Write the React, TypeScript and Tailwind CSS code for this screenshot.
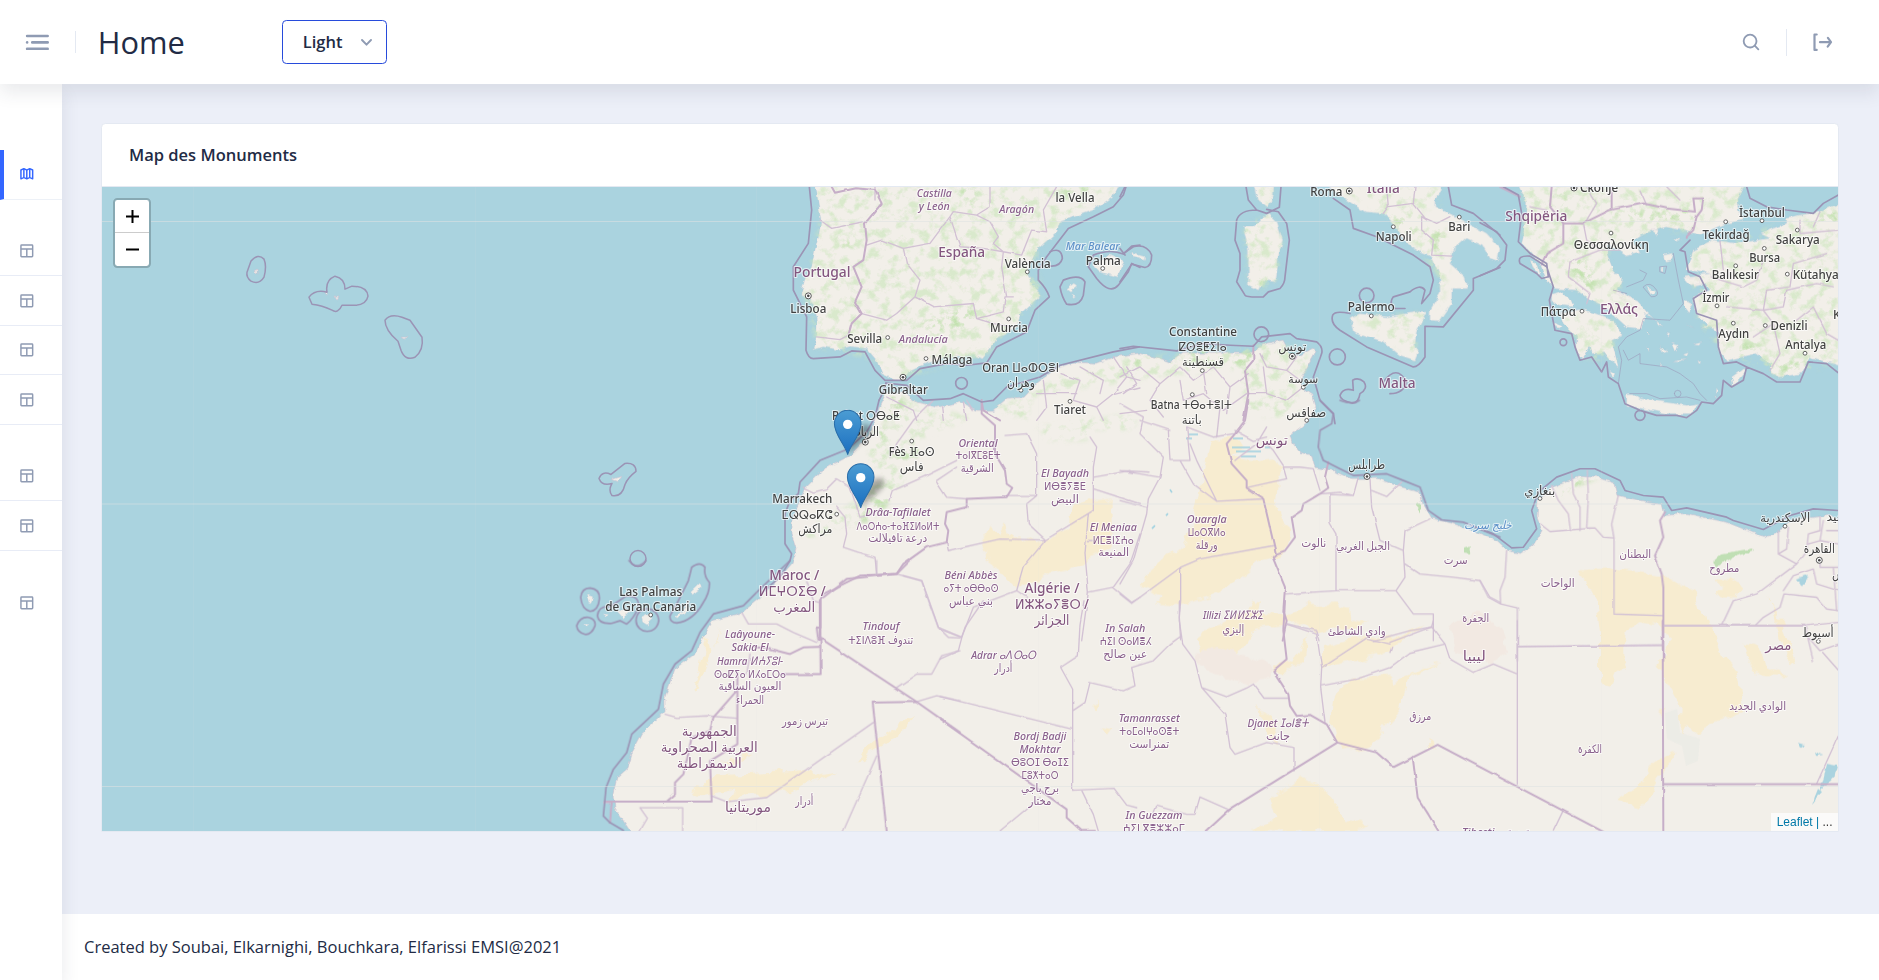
import React from "react";

/* ---------- icons ---------- */

const LayoutIcon = () => (
  <svg viewBox="0 0 24 24" className="h-[17.6px] w-[17.6px]" fill="none" stroke="#8f9bb3" strokeWidth="2">
    <rect x="4" y="4" width="16" height="16" rx="1" />
    <path d="M4 9.500H20M12 9.500V20" />
  </svg>
);

const MapIcon = () => (
  <svg viewBox="0 0 24 24" className="h-[17.6px] w-[17.6px]" fill="#3366ff">
    <path
      fillRule="evenodd"
      d="M20.410 5.890l-4-1.800H15.590L12 5.700 8.410 4.090H7.600l-4 1.800A1 1 0 0 0 3 6.800v12a1 1 0 0 0 .46.84 1 1 0 0 0 .95.070L8 18.100l3.590 1.610a1.060 1.060 0 0 0 .82 0L16 18.100l3.590 1.610a.92.92 0 0 0 .95-.07 1 1 0 0 0 .46-.84v-12a1 1 0 0 0-.59-.91zM5 7.440l2-.89v10l-2 .9zm4-.89l2 .89v10l-2-.9zm4 .89l2-.89v10l-2 .9zm6 10l-2-.9v-10l2 .9z"
    />
  </svg>
);

const MenuIcon = () => (
  <svg viewBox="0 0 24 24" className="h-[30.8px] w-[30.8px]" fill="#8f9bb3">
    <circle cx="4" cy="12" r="1" />
    <rect x="7" y="11" width="14" height="2" rx=".94" />
    <rect x="3" y="16" width="18" height="2" rx=".94" />
    <rect x="3" y="6" width="18" height="2" rx=".94" />
  </svg>
);

const SearchIcon = () => (
  <svg viewBox="0 0 24 24" className="h-[22px] w-[22px]" fill="#8f9bb3">
    <path d="M20.710 19.290l-3.400-3.390A7.920 7.920 0 0 0 19 11a8 8 0 1 0-8 8 7.920 7.920 0 0 0 4.900-1.690l3.390 3.400a1 1 0 0 0 1.420 0 1 1 0 0 0 0-1.420zM5 11a6 6 0 1 1 6 6 6 6 0 0 1-6-6z" />
  </svg>
);

const LogoutIcon = () => (
  <svg viewBox="0 0 24 24" className="h-[26.4px] w-[26.4px]" fill="#8f9bb3">
    <path d="M7 6a1 1 0 0 0 0-2H5a1 1 0 0 0-1 1v14a1 1 0 0 0 1 1h2a1 1 0 0 0 0-2H6V6z" />
    <path d="M20.820 11.420l-2.820-4a1 1 0 0 0-1.390-.24 1 1 0 0 0-.24 1.400L18.090 11H10a1 1 0 0 0 0 2h8l-1.800 2.400a1 1 0 0 0 .2 1.400 1 1 0 0 0 .6.200 1 1 0 0 0 .8-.4l3-4a1 1 0 0 0 .02-1.180z" />
  </svg>
);

/* ---------- map labels ---------- */

type Kind = "city" | "state" | "country" | "water";
// text, centre x, centre y, width, kind
type Label = [string, number, number, number, Kind];

const labels: Label[] = [
  ["Castilla", 934.3, 192.3, 35, "state"],
  ["y León", 934.3, 205.3, 31, "state"],
  ["Aragón", 1016.7, 208, 35, "state"],
  ["la Vella", 1075, 197.3, 39, "city"],
  ["España", 961.7, 252.3, 47, "country"],
  ["Mar Balear", 1092.7, 245, 54, "water"],
  ["Portugal", 822, 271.7, 57, "country"],
  ["València", 1027.7, 263.3, 46, "city"],
  ["Palma", 1103.3, 260, 35, "city"],
  ["Lisboa", 808.3, 308, 36, "city"],
  ["Murcia", 1009, 327.7, 38, "city"],
  ["Sevilla", 864.7, 338.3, 35, "city"],
  ["Andalucía", 923.3, 338.7, 49, "state"],
  ["Málaga", 952, 359.7, 41, "city"],
  ["Oran ⵡⴰⵀⵔⴻⵏ", 1020.7, 367, 77, "city"],
  ["وهران", 1021, 383, 28, "city"],
  ["Gibraltar", 903.3, 388.7, 49, "city"],
  ["Tiaret", 1070, 409.3, 32, "city"],
  ["Rabat ⵔⴱⴰⵟ", 866, 415.3, 68, "city"],
  ["الرباط", 865, 431.7, 28, "city"],
  ["Fès ⴼⴰⵙ", 911.7, 450.7, 46, "city"],
  ["فاس", 911.7, 466.7, 24, "city"],
  ["Oriental", 978, 441.7, 39, "state"],
  ["ⵜⴰⵏⴳⵎⵓⴹⵜ", 978, 454.3, 45, "state"],
  ["الشرقية", 977.3, 468.3, 33, "state"],
  ["El Bayadh", 1065, 472, 48, "state"],
  ["ⵍⴱⴻⵢⴻⴹ", 1065, 485, 42, "state"],
  ["البيض", 1065, 499, 28, "state"],
  ["Marrakech", 802.3, 498, 60, "city"],
  ["ⵎⵕⵕⴰⴽⵛ", 807, 513.7, 51, "city"],
  ["مراكش", 815.3, 529.3, 34, "city"],
  ["Drâa-Tafilalet", 898, 511.3, 65, "state"],
  ["ⴷⴰⵔⵄⴰ-ⵜⴰⴼⵉⵍⴰⵍⵜ", 898, 524.7, 83, "state"],
  ["درعة تافيلالت", 897.7, 537.7, 59, "state"],
  ["El Meniaa", 1113.3, 526, 47, "state"],
  ["ⵍⵎⴻⵏⵉⵄⴰ", 1113.3, 538.7, 41, "state"],
  ["المنيعة", 1113.7, 552.3, 31, "state"],
  ["Maroc /", 794.3, 574.7, 50, "country"],
  ["ⵍⵎⵖⵔⵉⴱ /", 792.3, 590.7, 67, "country"],
  ["المغرب", 794.3, 607.7, 42, "country"],
  ["Béni Abbès", 971, 573.7, 53, "state"],
  ["ⴰⵢⵜ ⴰⴱⴱⴰⵙ", 971, 586.7, 55, "state"],
  ["بني عباس", 971, 600.7, 44, "state"],
  ["Algérie /", 1052, 587.3, 55, "country"],
  ["ⵍⵣⵣⴰⵢⴻⵔ /", 1052, 603.3, 74, "country"],
  ["الجزائر", 1052, 620.7, 35, "country"],
  ["Roma", 1326.3, 191.3, 32, "city"],
  ["Italia", 1383.3, 188.3, 33, "country"],
  ["Napoli", 1393.7, 236.7, 36, "city"],
  ["Bari", 1459.3, 226, 22, "city"],
  ["Palermo", 1371.3, 306.7, 47, "city"],
  ["Constantine", 1203, 331.3, 68, "city"],
  ["ⵇⵙⴻⵟⵉⵏⴰ", 1202.7, 346.3, 48, "city"],
  ["قسنطينة", 1203, 362.3, 42, "city"],
  ["تونس", 1292.3, 347, 28, "city"],
  ["سوسة", 1303.3, 379, 30, "city"],
  ["Malta", 1397, 383, 37, "country"],
  ["Batna ⵜⴱⴰⵜⴻⵏⵜ", 1191.3, 404.3, 81, "city"],
  ["باتنة", 1191.7, 420, 20, "city"],
  ["صفاقس", 1306.3, 412.7, 40, "city"],
  ["Скопје", 1599, 188, 38, "city"],
  ["Shqipëria", 1536.3, 215.7, 62, "country"],
  ["Θεσσαλονίκη", 1611.3, 244, 75, "city"],
  ["Tekirdağ", 1726, 234, 47, "city"],
  ["İstanbul", 1762, 212, 46, "city"],
  ["Sakarya", 1797.7, 239.3, 44, "city"],
  ["Bursa", 1764.7, 257.3, 31, "city"],
  ["Balıkesir", 1735.3, 274.3, 47, "city"],
  ["Kütahya", 1815.7, 274.3, 46, "city"],
  ["İzmir", 1716, 297, 27, "city"],
  ["Πάτρα", 1558.3, 311.7, 35, "city"],
  ["Ελλάς", 1619, 309.3, 38, "country"],
  ["Aydın", 1733.7, 333.3, 31, "city"],
  ["Denizli", 1789, 325.7, 37, "city"],
  ["Antalya", 1805.7, 344.7, 41, "city"],
  ["Konya", 1851, 314, 36, "city"],
  ["تونس", 1271.7, 441, 32, "country"],
  ["طرابلس", 1366.7, 465.3, 37, "city"],
  ["Ouargla", 1206.7, 518, 40, "state"],
  ["ⵡⴰⵔⴳⵍⴰ", 1206.7, 531, 38, "state"],
  ["ورقلة", 1206.7, 545, 22, "state"],
  ["نالوت", 1313.7, 543.3, 25, "state"],
  ["الجبل الغربي", 1363, 545.7, 54, "state"],
  ["سرت", 1455.7, 560, 24, "state"],
  ["خليج سرت", 1488, 524.5, 48, "water"],
  ["Illizi ⵉⵍⵍⵉⵣⵉ", 1233, 614.3, 60, "state"],
  ["إليزي", 1233.3, 628.7, 22, "state"],
  ["وادي الشاطئ", 1356.7, 630.7, 58, "state"],
  ["الجفرة", 1475.7, 617.7, 27, "state"],
  ["بنغازي", 1539.7, 490.7, 31, "city"],
  ["الإسكندرية", 1785.3, 518, 50, "city"],
  ["بورسعيد", 1848, 517, 43, "city"],
  ["القاهرة", 1819.3, 549.3, 31, "city"],
  ["السويس", 1851, 574, 38, "city"],
  ["البطنان", 1635.3, 553.7, 32, "state"],
  ["مطروح", 1724.3, 567.7, 30, "state"],
  ["الواحات", 1557.7, 583, 34, "state"],
  ["أسيوط", 1817.7, 633, 32, "city"],
  ["مصر", 1778.3, 646, 26, "country"],
  ["Las Palmas", 650.7, 590.7, 63, "city"],
  ["de Gran Canaria", 650.7, 605.7, 91, "city"],
  ["Laâyoune-", 750, 633, 50, "state"],
  ["Sakia El", 750, 646, 37, "state"],
  ["Hamra ⵍⵄⵢⵓⵏ-", 750, 659.3, 66, "state"],
  ["ⵙⴰⵇⵢⴰ ⵍⵃⴰⵎⵔⴰ", 750, 672.7, 72, "state"],
  ["العيون الساقية", 750, 686, 63, "state"],
  ["الحمراء", 750, 699.3, 28, "state"],
  ["Tindouf", 881, 624.7, 37, "state"],
  ["ⵜⵉⵏⴷⵓⴼ تندوف", 880.7, 638.3, 65, "state"],
  ["تيرس زمور", 805, 720.3, 46, "state"],
  ["الجمهورية", 709.3, 731.3, 55, "country"],
  ["العربية الصحراوية", 709.3, 747.7, 97, "country"],
  ["الديمقراطية", 709.3, 764, 65, "country"],
  ["أدرار", 804.3, 800.3, 18, "state"],
  ["موريتانيا", 748, 808, 46, "country"],
  ["In Salah", 1125.3, 627, 40, "state"],
  ["ⵄⵉⵏ ⵙⴰⵍⴻⵃ", 1125.7, 640, 52, "state"],
  ["عين صالح", 1125.3, 653.7, 44, "state"],
  ["Adrar ⴰⴷⵔⴰⵔ", 1003.7, 653.3, 65, "state"],
  ["أدرار", 1003.3, 667.3, 18, "state"],
  ["Bordj Badji", 1040, 734.3, 53, "state"],
  ["Mokhtar", 1040, 747.3, 41, "state"],
  ["ⴱⵓⵔⵊ ⴱⴰⵊⵉ", 1040, 760.3, 58, "state"],
  ["ⵎⵓⵅⵜⴰⵔ", 1040, 773.3, 37, "state"],
  ["برج باجي", 1040, 788, 38, "state"],
  ["مختار", 1040, 801, 23, "state"],
  ["Tamanrasset", 1149.3, 716.7, 61, "state"],
  ["ⵜⴰⵎⴰⵏⵖⴰⵙⴻⵜ", 1149.3, 729.7, 60, "state"],
  ["تمنراست", 1149.3, 743.3, 40, "state"],
  ["Djanet ⵊⴰⵏⴻⵜ", 1278, 722, 61, "state"],
  ["جانت", 1278, 736, 24, "state"],
  ["In Guezzam", 1154, 813.3, 57, "state"],
  ["ⵄⵉⵏ ⴳⴻⵣⵣⴰⵎ", 1154, 826.7, 62, "state"],
  ["ليبيا", 1474.3, 656.7, 23, "country"],
  ["مرزق", 1420.3, 716, 22, "state"],
  ["الكفرة", 1590, 748.3, 24, "state"],
  ["الوادي الجديد", 1757.7, 705.7, 57, "state"],
  ["Tibesti تيبستي", 1495, 831, 66, "state"],
];

const labelStyle: Record<Kind, string> = {
  city: "fill-[#414141] text-[12.500px]",
  state: "fill-[#8a618d] text-[11.500px]",
  country: "fill-[#83567f] text-[14px]",
  water: "fill-[#5f92c9] text-[11.500px] italic",
};

const isLatin = (s: string) => /^[\u0000-\u024f]/.test(s);
const isArabic = (s: string) => /^[\u0600-\u06ff]/.test(s);

const towns: [number, number][] = [
  [1027.3, 271.7], [1102.7, 268.3], [1008.7, 318.7], [887.7, 337.3], [926, 358.3], [1021, 390],
  [1070, 401], [911.7, 440.7], [836.7, 513.7], [1393.3, 226.7], [1459.3, 217], [1371.3, 315.7],
  [1202.3, 370.3], [1303.3, 387], [1192.3, 394.3], [1306.7, 420], [1611, 233], [1725.7, 221.7],
  [1762, 220.7], [1797.3, 230], [1764.3, 248.3], [1735.7, 265.7], [1787.3, 274], [1717, 305.7],
  [1582, 311], [1733.3, 323], [1765.3, 325.3], [1805, 353], [1540, 498], [1785, 525.7],
  [1818.3, 640.7], [650.7, 614.3],
];
const capitals: [number, number][] = [
  [808.3, 295.7], [903, 377], [865.3, 441.7], [1349.3, 191], [1292.3, 356], [1574, 188],
  [1367, 476], [1819.3, 559.7],
];

/* ---------- map geometry: each sheet is drawn at 3 units per pixel ---------- */

const Sheet = ({ x, y, children }: { x: number; y: number; children: React.ReactNode }) => (
  <g transform={`translate(${x} ${y}) scale(.33333)`}>{children}</g>
);

const Country = ({ d }: { d: string }) => <path d={d} stroke="#c6aec8" strokeWidth="6" fill="none" />;
const Region = ({ d }: { d: string }) => <path d={d} stroke="#d2c1d4" strokeWidth="4" fill="none" />;
const Sea = ({ d }: { d: string }) => <path d={d} stroke="#9b94b5" strokeWidth="5" fill="none" />;

const AFRICA =
  "M630 830 615 807 613 793 617 777 628 767 633 750 642 733 665 710 665 697 675 668 695 653 703 637 713 620 742 612 760 597 777 580 792 563 797 548 792 533 792 517 800 500 805 487 822 470 850 455 867 437 875 420 880 405 886 393 898 392 903 392 917 402 937 407 960 402 977 410 993 410 1007 398 1023 397 1037 382 1057 368 1073 362 1097 363 1113 357 1139 353 1160 358 1170 362 1183 353 1220 353 1250 353 1267 343 1283 340 1290 353 1300 355 1313 348 1316 352 1307 368 1301 377 1303 388 1313 395 1316 407 1307 422 1290 435 1292 442 1300 452 1312 455 1315 467 1333 470 1350 478 1377 478 1402 487 1420 492 1423 503 1432 518 1453 523 1480 533 1497 540 1508 550 1520 553 1533 545 1542 530 1537 517 1538 500 1552 487 1580 476 1597 477 1615 483 1618 495 1640 500 1662 503 1665 515 1687 513 1727 522 1765 537 1780 532 1787 522 1800 517 1813 517 1827 515 1842 520 1842 834 630 834Z";

const Land = () => (
  <g fill="#f2efe9" stroke="#cdbfd0" strokeWidth=".6" filter="url(#coast)">
    <path d={AFRICA} />
    <Sheet x={760} y={180}>
      <path d="M165 0 178 90 183 120 175 170 165 210 155 260 135 300 122 345 150 355 165 385 172 420 170 470 158 508 190 500 235 508 272 498 320 505 350 540 365 580 405 600 430 600 445 575 500 550 560 530 640 525 668 535 695 500 712 470 770 445 785 400 845 345 815 310 800 275 830 210 890 155 900 125 1000 90 1060 50 1085 0Z" />
      <path d="M1000 255 1045 225 1080 235 1090 255 1070 290 1020 275ZM920 328 945 310 954 316 930 336ZM935 345 948 350 940 354ZM1118 220 1155 230 1152 240 1120 230Z" />
    </Sheet>
    <Sheet x={1120} y={180}>
      <path d="M600 0 680 60 735 95 790 100 830 145 860 190 905 220 935 230 960 290 960 340 930 390 930 420 960 422 995 370 995 325 1040 325 1035 290 990 250 1000 210 1040 175 1090 197 1110 235 1133 242 1140 205 1100 160 1010 110 945 80 945 55 965 30 960 0Z" />
      <path d="M690 415 720 400 800 410 860 400 920 392 890 450 885 490 895 515 885 540 840 525 790 485 700 455Z" />
      <path d="M370 140 400 140 445 100 470 125 488 180 475 230 468 305 430 300 415 330 385 315 385 210ZM400 0 415 60 445 82 460 50 462 0Z" />
      <path d="M820 600 835 612 830 616Z" />
    </Sheet>
    <Sheet x={1480} y={180}>
      <path d="M110 0 140 70 135 120 130 170 125 190 150 215 180 250 200 300 225 325 290 330 330 360 380 385 440 440 485 445 495 400 520 415 460 355 405 325 430 305 400 270 380 220 385 190 440 225 480 215 460 180 490 160 560 140 625 155 660 165 740 130 790 120 775 90 770 60 800 0Z" />
      <path d="M240 400 300 385 350 400 400 420 430 465 395 480 415 560 385 535 370 515 340 520 330 500 310 535 290 515 290 470 250 430ZM215 345 245 335 270 355 280 380 240 375 215 365Z" />
      <path d="M640 210 700 180 770 190 870 175 840 160 920 130 920 112 960 105 1020 95 1090 65 1090 560 990 530 965 580 900 590 870 575 870 550 830 520 740 540 715 510 720 460 690 440 645 400 640 350 690 330 680 310 640 320 615 290 690 280 620 270Z" />
      <path d="M440 640 460 640 480 655 620 675 655 670 640 700 560 700 440 675ZM755 590 790 565 795 575 760 615ZM710 620 716 625 708 655ZM150 235 175 260 182 288 160 265ZM400 330 470 360 500 395 440 365ZM550 225 580 220 575 240 555 243ZM500 320 525 335 515 348ZM610 295 655 290 660 310 630 318ZM615 360 637 370 625 398 615 385ZM512 150 535 150 530 165ZM580 175 605 178 590 187ZM525 418 550 440 535 435ZM575 490 592 495 585 515ZM540 500 560 510 550 515ZM500 455 510 465 502 465ZM560 460 570 462 565 470ZM610 520 625 515 620 525ZM640 490 665 485 660 492ZM620 435 640 445 628 440ZM390 570 405 580 398 592ZM220 425 245 440 235 450ZM545 265 553 262 550 275Z" />
      <path d="M580 540 620 535 600 543ZM500 500 508 510 503 512ZM540 545 550 552 545 555ZM665 440 700 435 680 444ZM650 540 660 548 654 550Z" />
    </Sheet>
    <Sheet x={560} y={560}>
      <path d="M82 100 98 105 95 125 90 130ZM170 150 215 148 190 172ZM245 170 265 160 280 175 262 193 248 185ZM392 95 420 68 425 80 398 102ZM345 170 370 150 390 120 385 145 355 172ZM70 190 88 192 80 200ZM130 160 142 162 137 170Z" />
    </Sheet>
    <path d="M254 272 257 270 257 274ZM334 296 338 296 336 299ZM612 479 622 476 618 481ZM325 291 329 292 326 294ZM402 336 408 336 405 338Z" />
  </g>
);

const Sand = () => (
  <g fill="#f7ecd0" filter="url(#rough)">
    <Sheet x={760} y={400}>
      <path d="M685 400 700 370 715 400 735 375 745 410 780 405 830 430 860 415 930 380 935 310 1000 300 1055 295 1055 400 1055 440 970 490 880 515 820 540 770 565 730 520 690 490 660 430Z" />
    </Sheet>
    <Sheet x={1120} y={400}>
      <path d="M270 120 350 110 370 140 330 170 420 185 460 180 490 205 470 245 465 300 490 370 515 390 505 430 480 470 430 480 320 560 270 590 160 615 105 608 125 585 60 560 90 515 200 420 230 310Z" />
      <path d="M510 640 570 605 690 625 700 690 640 680 590 700 540 670 420 680 360 700 400 600 415 630 505 645Z" />
    </Sheet>
    <Sheet x={940} y={600}>
      <path d="M650 0 730 0 690 12ZM770 110 830 70 930 30 960 0 950 60 925 115 880 185 820 190 790 170ZM1105 15 1180 5 1230 50 1280 60 1240 90 1180 85 1110 40ZM1140 200 1150 140 1280 105 1350 115 1350 150 1250 180ZM1010 195 1060 180 1100 100 1095 190 1060 190 1030 220 1000 210ZM1180 290 1240 230 1350 225 1365 330 1300 430 1210 450 1170 370ZM950 320 1000 350 1020 430 980 400ZM990 590 1080 528 1160 570 1210 660 1290 670 1240 692 930 690 1010 650ZM450 315 475 300 470 330ZM485 380 515 385 500 405Z" />
    </Sheet>
    <Sheet x={1390} y={620}>
      <path d="M0 190 100 140 160 125 60 165 30 270 0 310ZM0 60 100 10 60 45 0 85ZM630 0 760 0 700 40 695 100 710 145 680 150 660 195 630 185ZM815 0 955 0 1000 100 1040 150 1060 270 960 310 930 350 890 310 870 345 875 260 800 130 850 50ZM1055 70 1110 80 1130 140 1200 170 1110 165 1075 120ZM1155 0 1175 0 1215 130 1205 140ZM680 540 750 500 780 440 850 390 860 400 800 480 755 560 720 550ZM800 265 820 265 820 285ZM115 350 150 385 125 390Z" />
    </Sheet>
    <Sheet x={1480} y={420}>
      <path d="M300 450 370 440 545 460 640 510 720 720 540 720 570 650 540 615 470 600 430 640 430 720 370 720 350 550ZM700 470 750 480 785 500 770 530 710 525 735 500ZM865 530 885 565 935 720 920 700Z" />
    </Sheet>
    <Sheet x={560} y={560}>
      <path d="M480 190 470 240 460 270ZM440 220 450 260 410 390 405 380ZM390 695 470 640 700 630 750 625 760 645 830 635 740 670 700 690 600 700 540 705 505 730 520 680 430 700ZM880 610 930 550 1060 465 1040 500 960 560ZM480 600 580 580 520 615Z" />
    </Sheet>
  </g>
);

const Vegetation = () => (
  <g>
    <g fill="#cfe7c0" opacity=".7" filter="url(#veg)">
      <Sheet x={760} y={180}>
        <path d="M165 20 1080 20 900 125 830 210 845 345 770 445 670 530 430 590 350 540 170 500 130 340 180 120Z" />
        <path d="M900 590 1140 530 1140 600 980 620 820 650 800 720 700 690ZM400 640 470 670 500 720 370 720Z" />
      </Sheet>
      <Sheet x={760} y={400}>
        <path d="M320 120 500 20 640 50 470 120 480 180 400 180 440 240 300 370 120 420 150 380 260 320 380 220 330 190ZM840 80 1000 50 980 120 860 120ZM820 80 1130 40 1120 90Z" />
      </Sheet>
      <Sheet x={1120} y={180}>
        <path d="M400 20 460 20 440 80ZM370 140 440 100 488 180 470 300 415 330 385 310ZM640 20 960 20 960 80 900 90 990 250 960 422 960 300 900 210 790 100ZM700 410 920 395 890 450 890 540ZM0 540 440 490 560 500 560 580 400 560 300 570 0 600ZM360 560 520 560 540 720 380 700Z" />
      </Sheet>
      <Sheet x={1480} y={180}>
        <path d="M130 20 800 20 770 90 620 155 460 160 380 220 430 330 485 440 380 385 300 330 210 300 130 190ZM250 400 400 420 410 550 300 530ZM640 210 1075 80 1075 550 900 590 720 510 640 400Z" />
      </Sheet>
    </g>
    <g fill="#bfe0ab" opacity=".85" filter="url(#veg)">
      <Sheet x={760} y={180}>
        <path d="M480 430 560 400 640 370 640 430 520 460ZM900 20 1000 20 940 60ZM590 20 650 30 640 80ZM240 200 280 170 270 200ZM370 640 430 650 420 720 370 720Z" />
      </Sheet>
      <Sheet x={1120} y={180}>
        <path d="M330 540 400 510 395 560 340 550ZM20 530 80 530 60 560ZM220 510 300 515 280 545 200 545ZM400 295 430 300 415 325ZM820 110 880 120 890 170 840 150ZM930 140 980 150 970 225 940 210Z" />
      </Sheet>
      <Sheet x={1480} y={180}>
        <path d="M280 180 350 310 320 340 270 260ZM400 100 640 95 600 125 400 110ZM870 560 960 540 960 580 880 580ZM780 480 840 500 820 530 770 520ZM1000 120 1075 90 1075 160ZM240 30 270 80 250 100Z" />
      </Sheet>
      <Sheet x={760} y={400}>
        <path d="M300 340 400 250 380 320 310 370ZM330 90 380 70 370 120ZM400 180 470 130 470 170Z" />
      </Sheet>
      <Sheet x={1480} y={420}>
        <path d="M235 215 290 170 360 170 300 195 240 230Z" />
      </Sheet>
    </g>
    <path d="M760 517Z" />
  </g>
);

const Borders = () => (
  <g strokeLinejoin="round" strokeLinecap="round">
    <g filter="url(#wobble)">
      <Sheet x={760} y={180}>
        <Region d="M180 120 215 145 310 125M320 195 365 180 430 205 510 190 570 110 600 200 670 205 730 215 785 225 815 150 860 155M570 110 580 95 650 105 690 125 715 170 700 190 730 215M430 205 440 250 480 300 465 350 520 380 640 370 650 415 730 395 735 350 760 350M465 350 410 400 380 420 305 400M690 20 690 80 650 105M345 60 345 20M860 155 850 90 890 20M730 215 725 260 740 350M170 470 240 478 265 465M650 415 700 430 760 440" />
        <Region d="M380 650 460 690 470 720M545 680 550 720M610 665 620 720M850 600 860 680 830 720M900 580 960 600 940 660 1010 680 1060 640 1140 620M960 560 1030 600 1020 640M1060 530 1100 590 1060 640M830 640 950 640M1010 680 1030 720M1100 590 1140 600" />
        <Country d="M215 20 225 38 285 25 345 30 365 70 315 130 320 180 310 240 280 260 305 320 285 365 305 400 275 430 265 465" />
        <Country d="M665 665 670 690 720 720" />
      </Sheet>
      <Sheet x={1120} y={180}>
        <Region d="M800 20 805 80 790 100M805 80 880 70 885 20M880 70 920 120 905 110 950 130 990 110M905 110 905 150 940 180 935 225 995 228" />
        <Region d="M0 590 60 560 120 610 180 560 220 600 280 560 330 620 385 580M20 560 50 610 10 640M120 610 90 660 130 710M180 600 190 660 250 640 310 690 380 640M250 570 260 640M420 520 440 560 500 570 530 530M430 560 440 640 500 660 550 620M500 570 540 600M385 640 440 640M330 620 320 700M0 700 80 690" />
        <Country d="M400 495 400 540 375 570 385 640 370 720" />
      </Sheet>
      <Sheet x={1480} y={180}>
        <Region d="M150 80 200 90M320 20 350 70 320 120M480 30 500 75M560 20 600 60M310 130 320 180 360 210 270 245 265 290 330 340 320 370M360 210 420 210M850 240 830 300 790 320 690 290M1040 220 940 250 930 320 860 330 850 390 910 380 920 330 1010 310 1060 320M740 380 850 390 880 430 820 470M880 430 900 520 870 570M960 120 960 160 1075 150M720 180 730 270M1020 95 1000 140M950 420 1000 380 1040 460 1075 480" />
        <Country d="M215 20 210 80 250 130 250 190 200 220 185 250M250 130 310 130 390 90 490 70 560 85 645 95 640 55 670 55 665 90 650 110 640 150 620 170" />
        <Country d="M395 20 395 85M60 20 120 50" />
      </Sheet>
      <Sheet x={760} y={400}>
        <Region d="M130 260 160 275 200 265 230 235 270 260 300 350M230 320 255 350 260 400 250 440 310 460 345 470 350 520M300 350 340 340M390 300 400 270 500 225 590 180M460 60 410 130 390 170M530 245 560 290 620 295M590 200 530 240M735 105 800 100 830 160 830 285 800 310 805 370 857 418M560 425 565 450 720 415 857 418 1000 330 1000 200 1010 140 990 110M857 418 790 500 770 570 640 620 605 710M770 570 800 590M740 285 830 285M410 520 485 540 535 680 605 710M1000 230 1060 220 1110 210M1000 265 1140 310M985 340 975 460 985 575 965 720M985 575 1060 560 1115 605 1140 590M1000 420 985 420M1060 560 1110 490 1140 400M520 0 460 60M620 0 640 30" />
        <Country d="M665 0 665 40 705 75 705 160 735 210 740 250 757 262 740 290 620 295 620 320 560 335 555 370 565 390 560 425 500 440 430 490 410 520 300 525 190 580 180 600 180 720" />
      </Sheet>
      <Sheet x={1120} y={400}>
        <Region d="M0 210 120 230 130 170 60 100 70 50 0 10M120 230 85 295 80 340 40 480 0 550M0 300 80 322M145 90 150 180 210 180 200 80M150 90 60 60M180 180 220 250 290 302 430 295M210 130 230 180 290 302M200 80 280 110 340 100M345 180 410 130 440 80M385 260 500 235 490 200 540 200 580 205 600 270M490 195 460 150 440 130M345 90 400 120 440 110M630 282 630 370 648 400 648 570M630 282 700 285 715 230M750 235 755 320 780 420 850 450M755 270 800 288 845 245M648 570 828 570 855 530 850 450 855 390 930 355M497 580 648 570M182 500 182 600 178 650 182 720M0 580 35 608 182 500 240 475 460 435M855 490 900 520 1000 530 1080 540 1110 590 1140 605M828 570 880 640 940 640 940 720M500 670 590 690 600 720M700 285 660 275 600 280M935 680 870 690 760 720M0 210 90 215M300 20 290 110" />
        <Country d="M385 0 375 60 345 100 320 130 335 190 380 240 380 262 430 295 468 460 458 470 495 560 490 630 500 660 488 720" />
        <Country d="M625 185 615 230 625 262 600 280 550 310 545 330 515 350 525 410 495 450 468 460" />
      </Sheet>
      <Sheet x={1480} y={420}>
        <Region d="M215 195 235 240 265 280 272 330M275 160 280 220 300 260 300 330M322 150 325 230 320 322 345 322 370 350 400 352M180 310 210 333 345 322M415 225 395 310 402 352 402 580 550 585M80 390 75 470 60 510 62 550 112 562 112 720M0 480 25 530 62 550M112 677 550 675M550 615 975 615 1000 720M725 615 760 540 830 520 950 430 895 400 895 330M825 615 850 590 900 560 912 520 1010 530 1040 565 1075 570M910 510 940 465 1000 445 1010 490 1075 510M950 430 980 390 985 340 1020 330 1020 290M895 400 920 385 925 320M1030 300 1020 360 1075 370M1020 410 1020 440 1075 440M985 650 1020 690 1075 670M985 370 1020 360M1040 330 1075 330M1060 440 1070 570M980 615 1075 605" />
        <Country d="M555 275 540 300 550 350 525 405 545 460 550 500 550 720" />
      </Sheet>
      <Sheet x={560} y={560}>
        <Region d="M545 155 565 190 650 190 700 215 770 245M315 460 350 470 440 465 530 472M940 485 620 710 500 722 455 705M950 585 850 810M130 725 150 725M240 740 368 740 368 810M240 740 262 772 240 810M950 0 950 40M1010 380 1070 340 1115 340 1145 285 1200 270M1070 423 1130 405 1200 420M740 60 760 120 775 125M1030 45 1085 60 1135 200 1165 230 1200 232M570 280 560 340" />
        <Country d="M775 240 770 200 782 202 782 120M780 120 782 340 665 340M620 262 690 280 730 260 778 258M630 262 585 260M532 340 532 550 450 600 455 722 138 722M530 390 460 470 450 510 395 530 370 640 345 665 345 700 320 722M780 232 1070 423 938 425 980 810M1070 423 1200 515M155 725 150 785M790 110 860 55 1010 40 1050 0" />
      </Sheet>
      <Sheet x={940} y={600}>
        <Region d="M0 287 398 385M432 0 420 70 415 165 362 200 398 265 398 568 522 562 560 612 590 620M425 568 460 640 475 690M180 690 300 590M398 330 435 305 450 245 520 262 550 270 585 255 575 200 640 180 690 130 725 105M718 0 718 60 728 130 765 180 785 260 855 340 870 440 885 460 980 425 1062 440 1062 510M785 260 860 288 920 262 940 250 972 292 1045 292M640 640 650 615 740 640 765 640 780 588 870 628M1040 70 1130 100 1145 200 1142 260 1155 365M1145 200 1280 112 1350 130M1145 255 1250 235 1350 200M130 0 75 80 65 110 0 85M65 112 55 150 0 175" />
        <Country d="M0 355 380 625 380 650 425 690 465 690M1035 0 1030 90 1040 175 1000 210 1045 280 1050 315 1070 345 1110 342 1160 370 1192 425 1310 455 1350 490M1192 425 870 625 800 690" />
      </Sheet>
      <Sheet x={1390} y={620}>
        <Region d="M382 0 382 490M382 78 820 72M520 568 490 630M1345 345 1280 488M125 18 165 70 180 115 250 155 310 130 382 160M0 140 60 95 165 70M0 65 125 18 130 0M1298 95 1345 148M820 15 1245 15M0 95 5 80" />
        <Country d="M0 435 12 438 143 372 640 632M818 0 820 630M68 408 83 530 115 580 145 630M820 490 1345 490" />
      </Sheet>
    </g>

    <Sheet x={560} y={560}>
      <Sea d="M190 808 150 785 130 765 138 680 160 625 200 575 215 520 295 445 310 370 345 310 395 270 420 215 460 160 550 135 600 85 690 0" />
      <Sea d="M62 110Q65 82 90 82 120 85 118 115 115 150 90 152 65 145 62 110ZM50 195Q60 168 85 170 108 175 105 195 95 222 75 221 52 215 50 195ZM112 165Q115 135 150 138L200 105Q240 105 235 140 220 175 200 190L180 180 155 188Q115 190 112 165ZM228 180C230 130 295 135 296 180 290 225 230 220 228 180ZM330 165 350 130 385 60 395 20Q420 0 435 20 430 45 448 65 450 95 430 125 400 180 350 187 328 185 330 165ZM207 0Q230 30 258 0" />
    </Sheet>
    <Sheet x={760} y={400}>
      <Sea d="M90 480 95 460 75 430 75 340 90 300 115 280 120 245 180 180 265 145 320 95 345 50 357 0M90 480 60 530 0 580" />
    </Sheet>
    <Sheet x={760} y={180}>
      <Sea d="M357 660 372 630 378 608M148 20 155 90 145 190 100 260 100 330 140 410 138 510Q145 535 160 535L240 530 275 512 315 515 345 570 375 600 440 600 480 565 560 550 620 555 680 548 710 500 800 455 825 390 868 350Q860 325 835 300L835 270 860 230 925 145 1000 110 1060 80 1090 45 1098 20" />
      <Sea d="M378 608 440 615 490 660 570 655 610 640 665 665 700 660 740 620 840 590 900 555 1060 515 1138 500M587 609a17 17 0 1 0 35 0a17 17 0 1 0 -35 0M870 215Q905 200 907 235 900 262 865 257M900 320 910 300Q960 280 975 305L970 345Q960 380 920 372 905 350 900 320M985 260 1000 225Q1050 205 1090 222L1115 198 1140 195M985 260 1010 295Q1050 345 1075 315L1105 275 1115 250 1140 262" />
    </Sheet>
    <Sheet x={1120} y={180}>
      <Sea d="M0 505 40 498 170 512 250 490 330 495 400 498 425 470 510 460 530 475 590 485Q610 500 605 520L580 590 600 660 640 700 645 730M402 462a22 22 0 1 0 44 0a22 22 0 1 0 -44 0M628 530a24 24 0 1 0 48 0a24 24 0 1 0 -48 0M698 600Q715 590 732 605 745 625 720 640 715 670 695 668 660 660 660 645 670 620 700 630ZM718 346a22 22 0 1 0 44 0a22 22 0 1 0 -44 0M790 605Q830 550 860 605 850 640 810 640" />
      <Sea d="M378 20 385 60 410 90 440 100 478 82 483 20M410 90Q360 90 350 120L345 180 360 220 360 270 350 305 375 345Q380 352 430 350L445 335 480 325Q495 310 495 290L508 180 500 130 475 95 440 88M640 55 690 90 700 145 770 170 880 225 930 260 940 300 930 340 905 370 915 330Q900 310 870 335L820 350Q805 370 825 385L855 385M985 20 995 75 1060 100 1140 165M1140 262 1060 295 1060 330 970 440 915 438 915 530Q895 560 880 560L740 500 660 450Q630 430 638 405 645 390 690 400M10 220 40 200Q80 190 95 225 95 260 75 262L35 252 0 305M0 205 15 225M0 50 15 20" />
    </Sheet>
    <Sheet x={1480} y={180}>
      <Sea d="M70 20 115 45 125 100 115 185 150 220 200 250 205 290M0 128 50 155 80 195 75 240 50 265 0 287M205 290 185 295 170 280 120 250Q110 225 150 228L200 260 220 320 208 360 215 400 225 450 275 460 285 500 300 540 335 530 365 575 380 545 385 590 415 610 435 670 480 690 530 705 590 705 620 712 650 690 665 665 700 670 725 645 730 600 755 620 790 600 800 560 770 545 730 550 715 500 710 420 650 400 640 355 680 330 660 290 625 275 615 215 600 210 630 180M240 486a10 10 0 1 0 20 0a10 10 0 1 0 -20 0M465 705a15 15 0 1 0 30 0a15 15 0 1 0 -30 0M800 560 850 580 890 605 960 605 985 545 1040 550 1075 578M800 20 810 55 860 80 920 90 1000 100 1030 70 1075 45" />
      <path d="M440 340 400 330M480 270 500 280 490 300 440 320M490 320Q510 300 530 330 540 350 515 350ZM540 260 560 258 555 280 540 275ZM580 220 595 300 610 370 570 420 490 415 480 450 440 470 415 500 425 540 415 610M430 510 445 540 480 520 480 550 560 560 600 580 640 610 660 640 680 660M583 640a10 10 0 1 0 20 0a10 10 0 1 0 -20 0M450 640 500 640 540 655 620 650 660 660" stroke="#988fb3" strokeOpacity=".6" strokeWidth="2.500" fill="none" />
    </Sheet>
    <Sheet x={1120} y={400}>
      <Sea d="M600 0 640 40 635 70 600 90 595 140 610 180 660 205 700 225 800 220 850 240 900 260 925 330 965 358 1030 365 1140 410M660 0Q700 15 718 0" />
    </Sheet>
    <Sheet x={1480} y={420}>
      <Sea d="M0 325 40 340 95 382 130 380 170 325 155 270 175 215 230 170 300 145 345 145 420 180 435 210 490 225 550 230 575 270 620 262 740 290 760 300 850 327 930 285 1000 265 1075 270" />
    </Sheet>
    <g stroke="#9b94b5" strokeWidth="1.500" fill="none">
      <path d="M247 272 251 261Q258 253 264 259 267 266 264 277 259 285 251 281 246 277 247 272Z" />
      <path d="M309 297Q315 289 327 292 325 280 335 276 345 278 345 289L352 286Q367 286 368 296 366 306 352 305L342 305Q338 314 332 310 322 305 312 304Z" />
      <path d="M385 320Q390 313 402 317L410 320 422 337Q424 350 415 357 405 361 401 350L398 341Q385 330 385 320Z" />
      <path d="M599 478Q602 470 611 474L625 463Q636 462 636 471 628 477 625 484 622 497 612 495 608 490 612 483 602 486 599 478Z" />
      <circle cx="638" cy="558" r="8" />
    </g>
  </g>
);

const MapDrawing = () => (
  <svg viewBox="102 187 1736 643" className="block h-full w-full" preserveAspectRatio="none">
    <defs>
      <filter id="coast" x="0" y="0" width="100%" height="100%">
        <feTurbulence type="fractalNoise" baseFrequency=".12" numOctaves="3" seed="4" result="n" />
        <feDisplacementMap in="SourceGraphic" in2="n" scale="5" xChannelSelector="R" yChannelSelector="G" />
      </filter>
      <filter id="wobble" x="0" y="0" width="100%" height="100%">
        <feTurbulence type="fractalNoise" baseFrequency=".06" numOctaves="2" seed="4" result="n" />
        <feDisplacementMap in="SourceGraphic" in2="n" scale="2.500" xChannelSelector="R" yChannelSelector="G" />
      </filter>
      <filter id="rough" x="0" y="0" width="100%" height="100%">
        <feTurbulence type="fractalNoise" baseFrequency=".07" numOctaves="3" seed="9" result="n" />
        <feDisplacementMap in="SourceGraphic" in2="n" scale="12" xChannelSelector="R" yChannelSelector="G" />
      </filter>
      <filter id="veg" x="0" y="0" width="100%" height="100%">
        <feGaussianBlur in="SourceGraphic" stdDeviation="2" result="s" />
        <feTurbulence type="fractalNoise" baseFrequency=".1" numOctaves="5" seed="12" />
        <feColorMatrix values="0 0 0 0 0  0 0 0 0 0  0 0 0 0 0  0 0 0 4 -1.900" result="m" />
        <feComposite in="s" in2="m" operator="in" />
      </filter>
      <linearGradient id="pin" x1="0" y1="0" x2="0" y2="1">
        <stop offset="0" stopColor="#4b9cd3" />
        <stop offset="1" stopColor="#1b6fc0" />
      </linearGradient>
      <filter id="soft" x="-50%" y="-50%" width="200%" height="200%">
        <feGaussianBlur stdDeviation="2.400" />
      </filter>
    </defs>
    <rect x="102" y="187" width="1736" height="643" fill="#aad3df" />
    <Land />
    <Vegetation />
    <Sand />
    <g fill="#f2e9e2" filter="url(#rough)">
      <path d="M1195 660 1210 645 1275 665 1270 678 1248 684 1210 672ZM1450 625 1480 610 1500 625 1508 650 1490 662 1455 650Z" />
    </g>
    <g fill="#ecece6">
      <path d="M1665 712 1677 708 1680 732 1700 738 1698 760 1686 765 1682 745 1667 738Z" />
    </g>
    <g fill="#c0dfb4" filter="url(#coast)">
      <path d="M1712 562 1722 553 1752 548 1754 551 1735 556 1724 562 1716 567ZM1464 547 1471 545 1470 554 1464 553ZM1416 503 1421 502 1421 512Z" />
    </g>
    <g fill="#aad3df" filter="url(#coast)">
      <path d="M1827 763 1838 765 1836 773 1825 785 1820 790 1824 776ZM1796 578 1808 574 1802 586ZM1818 788 1822 791 1812 803ZM1815 751 1823 754 1816 755ZM1798 742 1805 744 1800 747Z" />
    </g>
    <path
      d="M1233 438H1243M1232 447H1250M1236 451H1261M1241 456H1256M1265 447H1270M1189 434H1198M1186 438H1192M1170 489 1172 492M1166 515 1168 513M1152 528 1155 525"
      stroke="#9dd0e0"
      strokeWidth="1.500"
      fill="none"
    />
    <Borders />
    <g stroke="#dfe2e2" strokeOpacity=".55" strokeWidth="1">
      <path d="M102 221.500H1838M102 503.500H1838M102 785.500H1838" />
      <path strokeOpacity=".1" d="M193.500 187V830M475.500 187V830M756.500 187V830M1038.500 187V830M1319.500 187V830M1601.500 187V830" />
    </g>
    <g fill="#fff" stroke="#555" strokeWidth=".9">
      {towns.map(([x, y]) => (
        <circle key={`${x}-${y}`} cx={x} cy={y} r="1.900" />
      ))}
    </g>
    {capitals.map(([x, y]) => (
      <g key={`${x}-${y}`}>
        <circle cx={x} cy={y} r="3" fill="#fff" stroke="#444" strokeWidth=".9" />
        <circle cx={x} cy={y} r="1.300" fill="#444" />
      </g>
    ))}
    <g
      textAnchor="middle"
      stroke="#fff"
      strokeOpacity=".65"
      strokeWidth="2.200"
      strokeLinejoin="round"
      className="font-['Noto_Sans','DejaVu_Sans',sans-serif] font-medium [paint-order:stroke]"
    >
      {labels.map(([t, x, y, w, kind], i) => (
        <text
          key={i}
          x={x}
          y={y + (isArabic(t) ? 3.5 : kind === "country" ? 5 : 4.5)}
          textLength={w}
          lengthAdjust="spacingAndGlyphs"
          className={labelStyle[kind]}
          fontStyle={kind === "state" && isLatin(t) ? "italic" : undefined}
        >
          {t}
        </text>
      ))}
    </g>
    {[
      [847.7, 454.3],
      [860.7, 507.5],
    ].map(([x, y]) => (
      <g key={x} transform={`translate(${x} ${y})`}>
        <path d="M0 0 20-18Q27-27 20-30 11-31 4-18Z" fill="#000" opacity=".3" filter="url(#soft)" />
        <path
          d="M0 0C-2-9-13.300-20-13.300-31A13.300 13.300 0 0 1 13.300-31C13.300-20 2-9 0 0Z"
          fill="url(#pin)"
          stroke="#2a6da8"
          strokeWidth="1"
        />
        <circle cx="0" cy="-30.300" r="4.700" fill="#fff" />
      </g>
    ))}
  </svg>
);

/* ---------- page ---------- */

const SideItem = ({ active, last }: { active?: boolean; last?: boolean }) => (
  <a
    className={
      "flex h-[49.500px] items-center pl-[17.600px] " +
      (active ? "border-l-4 border-b border-l-[#3366ff] border-b-[#edf1f7] pl-[13.600px]!" : last ? "" : "border-b border-[#e8ecf6]")
    }
  >
    {active ? <MapIcon /> : <LayoutIcon />}
  </a>
);

export default function App() {
  return (
    <div className="flex h-[980px] w-full flex-col overflow-hidden bg-[#eceff8] font-['Open_Sans',sans-serif] text-[#222b45]">
      <header className="relative z-20 flex h-[84px] shrink-0 items-center bg-white pr-[43.600px] pl-[22px] shadow-[0_8.800px_17.600px_0_rgba(44,51,73,0.1)]">
        <MenuIcon />
        <div className="ml-[22px] h-[22px] w-px bg-[#e4e9f2]" />
        <h1 className="ml-[22px] w-[184px] text-[30.800px] leading-[44px] font-normal">Home</h1>
        <button className="flex h-[44px] w-[105px] items-center justify-between rounded-[4.400px] border border-[#274bdb] bg-white pr-[14px] pl-[20px] text-[16.500px] font-semibold">
          Light
          <svg viewBox="0 0 11 7" className="h-[7px] w-[11px]" fill="none" stroke="#8f9bb3" strokeWidth="1.900" strokeLinecap="round" strokeLinejoin="round">
            <path d="M1 1 5.500 5.700 10 1" />
          </svg>
        </button>
        <div className="ml-auto flex items-center">
          <SearchIcon />
          <div className="ml-[24px] h-[27px] w-px bg-[#e4e9f2]" />
          <div className="ml-[22px]">
            <LogoutIcon />
          </div>
        </div>
      </header>
      <div className="flex min-h-0 flex-1">
        <aside className="relative z-10 w-[62px] shrink-0 bg-white pt-[66px] shadow-[0_8.800px_17.600px_0_rgba(44,51,73,0.1)]">
          <nav className="flex flex-col gap-[27.200px]">
            <div>
              <SideItem active />
            </div>
            <div>
              <SideItem />
              <SideItem />
              <SideItem />
              <SideItem />
            </div>
            <div>
              <SideItem />
              <SideItem />
            </div>
            <div>
              <SideItem last />
            </div>
          </nav>
        </aside>
        <div className="flex min-w-0 flex-1 flex-col">
          <main className="flex-1 pt-[39px] pr-[40px] pl-[39px]">
            <section className="flex h-[709px] flex-col overflow-hidden rounded-t-[4.400px] border border-[#e4e9f2] bg-white">
              <h2 className="flex h-[63px] shrink-0 items-center border-b border-[#e4e9f2] pl-[27px] text-[16.500px] font-semibold">
                Map des Monuments
              </h2>
              <div className="relative h-[644px] shrink-0 overflow-hidden">
                <MapDrawing />
                <div className="absolute top-[11px] left-[11px] flex w-[38px] flex-col overflow-hidden rounded-[4.400px] border-2 border-[#88a9b3] bg-white">
                  <button className="flex h-[33px] items-center justify-center border-b border-[#ccc]">
                    <svg viewBox="0 0 13 13" className="h-[13px] w-[13px]" stroke="#000" strokeWidth="2">
                      <path d="M0 6.500H13M6.500 0V13" />
                    </svg>
                  </button>
                  <button className="flex h-[33px] items-center justify-center">
                    <svg viewBox="0 0 13 13" className="h-[13px] w-[13px]" stroke="#000" strokeWidth="2">
                      <path d="M0 6.500H13" />
                    </svg>
                  </button>
                </div>
                <div className="absolute right-0 bottom-0 flex h-[18px] items-center bg-white/70 px-[5.500px] font-['Liberation_Sans',sans-serif] text-[12px] whitespace-pre text-[#333]">
                  <a className="text-[#0078a8]">Leaflet</a>
                  <span className="text-[#0078a8]"> | </span>...
                </div>
              </div>
            </section>
          </main>
          <footer className="flex h-[66px] shrink-0 items-center bg-white pl-[22px] text-[16.500px]">
            Created by Soubai, Elkarnighi, Bouchkara, Elfarissi EMSI@2021
          </footer>
        </div>
      </div>
    </div>
  );
}
